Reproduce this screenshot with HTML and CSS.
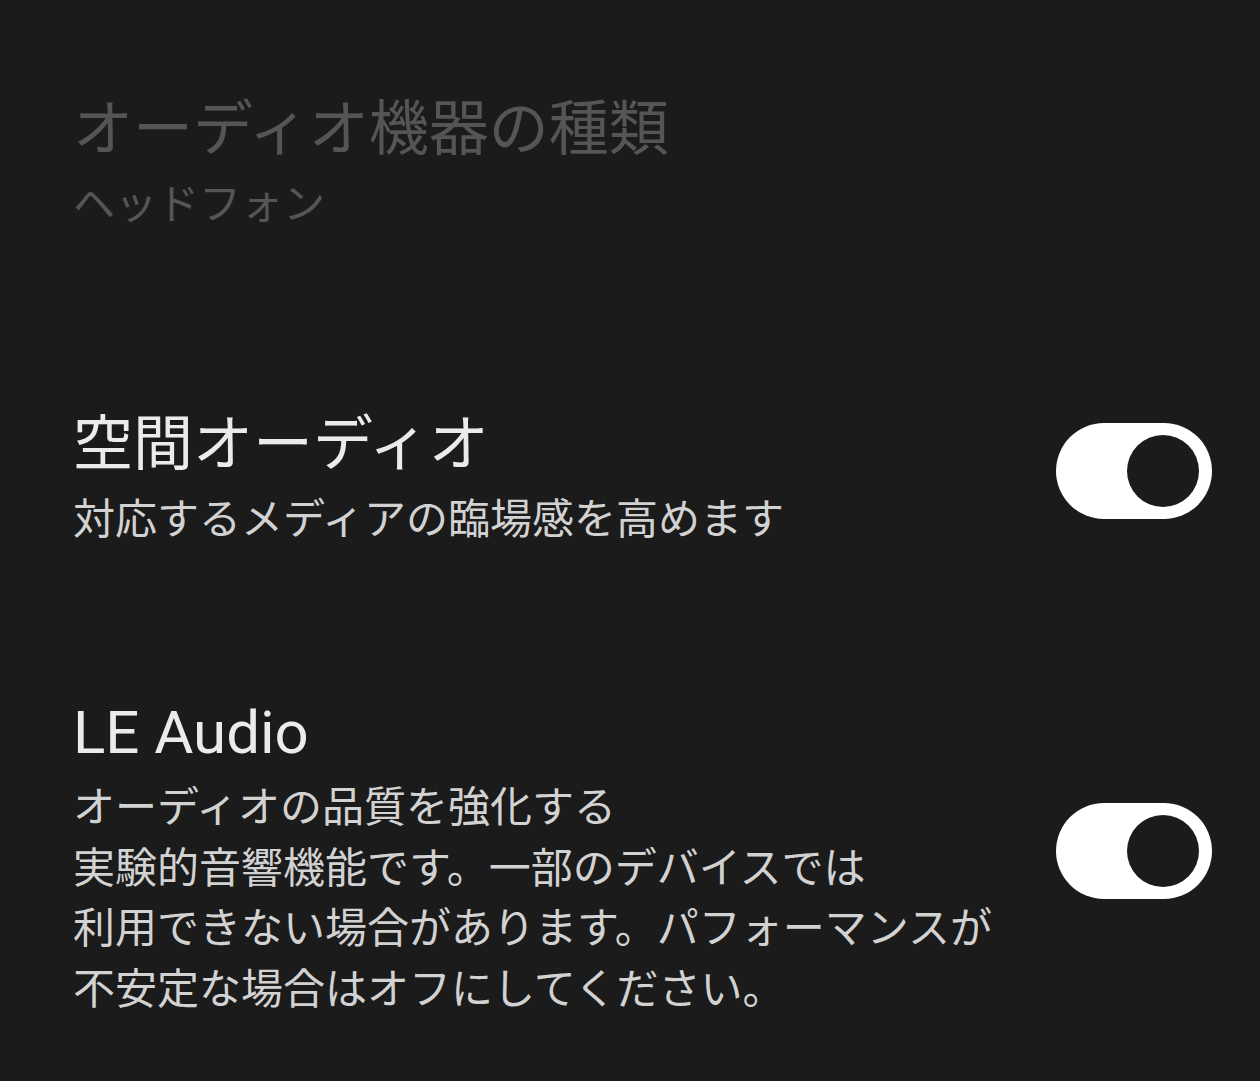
FILE: index.html
```html
<!DOCTYPE html>
<html lang="ja">
<head>
<meta charset="utf-8">
<title>オーディオ設定</title>
<link rel="stylesheet" href="styles.css">
</head>
<body>
<main class="settings">
  <section class="pref pref-disabled">
    <div class="pref-text">
      <h2 class="pref-title">オーディオ機器の種類</h2>
      <p class="pref-summary">ヘッドフォン</p>
    </div>
  </section>

  <section class="pref pref-spatial">
    <div class="pref-text">
      <h2 class="pref-title">空間オーディオ</h2>
      <p class="pref-summary">対応するメディアの臨場感を高めます</p>
    </div>
    <div class="switch switch-on" role="switch" aria-checked="true"><span class="switch-thumb"></span></div>
  </section>

  <section class="pref pref-le">
    <div class="pref-text">
      <h2 class="pref-title">LE Audio</h2>
      <p class="pref-summary">オーディオの品質を強化する<br>実験的音響機能です。一部のデバイスでは<br>利用できない場合があります。パフォーマンスが<br>不安定な場合はオフにしてください。</p>
    </div>
    <div class="switch switch-on" role="switch" aria-checked="true"><span class="switch-thumb"></span></div>
  </section>
</main>
</body>
</html>
```
FILE: styles.css
```css
html, body {
  margin: 0;
  padding: 0;
  background: #1b1b1b;
}

body {
  width: 1260px;
  height: 1081px;
  overflow: hidden;
  font-family: Roboto, "Noto Sans CJK JP", sans-serif;
}

.settings {
  display: flex;
  flex-direction: column;
  padding: 88px 48px 0 73px;
}

.pref {
  display: flex;
  align-items: center;
  justify-content: space-between;
}

.pref-text {
  display: flex;
  flex-direction: column;
}

.pref-title {
  margin: 0;
  font-weight: 400;
  font-size: 60px;
  line-height: 84px;
  color: #ebebeb;
}

.pref-summary {
  margin: 3px 0 0;
  font-size: 42px;
  line-height: 60.5px;
  color: #d2d2d2;
}

.pref-disabled .pref-title,
.pref-disabled .pref-summary {
  color: #555555;
}

.pref-spatial {
  margin-top: 167px;
}

.pref-le {
  margin-top: 141px;
}

/* on-state switch: white track, dark knob on the right */
.switch {
  flex: none;
  width: 156px;
  height: 96px;
  margin-bottom: 10px;
  border-radius: 48px;
  background: #ffffff;
  display: flex;
  align-items: center;
  justify-content: flex-end;
  padding-right: 13px;
  box-sizing: border-box;
}

.switch-thumb {
  width: 72px;
  height: 72px;
  border-radius: 50%;
  background: #1b1b1b;
}
```
